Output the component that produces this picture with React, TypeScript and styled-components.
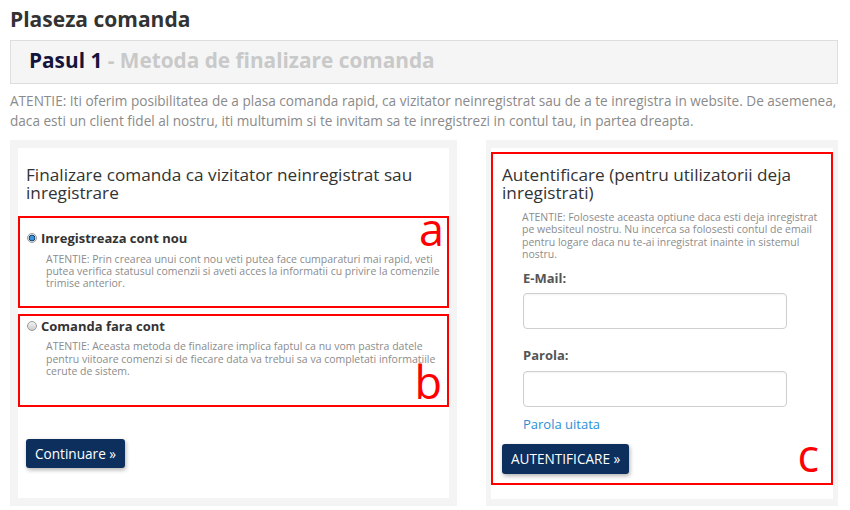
import styled, { createGlobalStyle } from 'styled-components';

const GlobalStyle = createGlobalStyle`
  body {
    margin: 0;
    background: #fff;
    font-family: "Open Sans", "Liberation Sans", sans-serif;
    color: #333;
  }
`;

const App = () => (
  <Page>
    <GlobalStyle />
    <PageTitle>Plaseza comanda</PageTitle>
    <StepBox>
      <StepNumber>Pasul 1</StepNumber>
      <StepName> - Metoda de finalizare comanda</StepName>
    </StepBox>
    <Intro>
      ATENTIE: Iti oferim posibilitatea de a plasa comanda rapid, ca vizitator neinregistrat sau de a te
      inregistra in website. De asemenea, daca esti un client fidel al nostru, iti multumim si te invitam sa te
      inregistrezi in contul tau, in partea dreapta.
    </Intro>
    <Columns>
      <Panel $pad="8px">
        <Card $pb="30px">
          <CardTitle $indent="8px">Finalizare comanda ca vizitator neinregistrat sau inregistrare</CardTitle>
          <Option $pad="12px 3px 16px 7px">
            <OptionLabel>
              <Radio $checked />
              Inregistreaza cont nou
            </OptionLabel>
            <Note $indent="19px">
              ATENTIE: Prin crearea unui cont nou veti putea face cumparaturi mai rapid, veti putea verifica
              statusul comenzii si aveti acces la informatii cu privire la comenzile trimise anterior.
            </Note>
            <Marker $top="-12px" $right="3px">a</Marker>
          </Option>
          <Option $pad="2px 3px 28px 7px">
            <OptionLabel>
              <Radio />
              Comanda fara cont
            </OptionLabel>
            <Note $indent="19px">
              ATENTIE: Aceasta metoda de finalizare implica faptul ca nu vom pastra datele pentru viitoare
              comenzi si de fiecare data va trebui sa va completati informatiile cerute de sistem.
            </Note>
            <Marker $top="43px" $right="5px">b</Marker>
          </Option>
          <Button $mt="32px" $ml="8px">Continuare »</Button>
        </Card>
      </Panel>
      <Panel $pad="8px 5px 7px">
        <Card>
          <LoginBox>
            <CardTitle>Autentificare (pentru utilizatorii deja inregistrati)</CardTitle>
            <Note $indent="20px" $mt="9px">
              ATENTIE: Foloseste aceasta optiune daca esti deja inregistrat pe websiteul nostru. Nu incerca sa
              folosesti contul de email pentru logare daca nu te-ai inregistrat inainte in sistemul nostru.
            </Note>
            <Field>
              <FieldLabel>E-Mail:</FieldLabel>
              <Input type="text" />
            </Field>
            <Field $mt="18px">
              <FieldLabel>Parola:</FieldLabel>
              <Input type="password" />
            </Field>
            <ForgotLink href="#">Parola uitata</ForgotLink>
            <Button $mt="11px" $h="30px">AUTENTIFICARE »</Button>
            <Marker $top="278px" $right="12px">c</Marker>
          </LoginBox>
        </Card>
      </Panel>
    </Columns>
  </Page>
);

const Page = styled.div`
  padding: 0 12px 0 10px;
`;

const PageTitle = styled.h1`
  margin: 7px 0 0;
  font-size: 21px;
  line-height: 25px;
  font-weight: 700;
  color: #333;
`;

const StepBox = styled.div`
  margin-top: 8px;
  padding: 7px 18px 11px;
  border: 1px solid #dedede;
  background: #f5f5f5;
  font-size: 20.8px;
  line-height: 24px;
  font-weight: 700;
`;

const StepNumber = styled.span`
  color: #14143c;
`;

const StepName = styled.span`
  color: #c9c9c9;
`;

const Intro = styled.p`
  margin: 7px -12px 9px 0;
  font-size: 13.6px;
  line-height: 20px;
  color: #8a8a8a;
`;

const Columns = styled.div`
  display: grid;
  grid-template-columns: 447px 352px;
  column-gap: 29px;
  align-items: stretch;
`;

const Panel = styled.div<{ $pad: string }>`
  background: #f4f4f5;
  padding: ${p => p.$pad};
  display: flex;
`;

const Card = styled.div<{ $pb?: string }>`
  flex: 1;
  background: #fff;
  padding-bottom: ${p => p.$pb || '0'};
`;

const CardTitle = styled.h2<{ $indent?: string }>`
  margin: 0;
  padding: ${p => (p.$indent ? `18px ${p.$indent} 0` : '0')};
  margin-bottom: ${p => (p.$indent ? '14px' : '0')};
  font-size: 17.2px;
  line-height: 18px;
  font-weight: 400;
  color: #333;
`;

const Option = styled.div<{ $pad: string }>`
  position: relative;
  border: 2px solid #ff0000;
  padding: ${p => p.$pad};
  & + & {
    margin-top: 6px;
  }
`;

const OptionLabel = styled.label`
  display: flex;
  align-items: center;
  gap: 4px;
  font-size: 13px;
  line-height: 16px;
  font-weight: 700;
  color: #333;
`;

const Radio = styled.span<{ $checked?: boolean }>`
  flex: none;
  box-sizing: border-box;
  width: 10px;
  height: 10px;
  border-radius: 50%;
  border: 1px solid #9c9c9c;
  background: ${p =>
    p.$checked
      ? 'radial-gradient(circle, #3f93d8 0 2px, #0d3c6e 2.8px 3.2px, #ececec 3.6px)'
      : 'linear-gradient(#f2f2f2, #cdcdcd)'};
`;

const Note = styled.p<{ $indent: string; $mt?: string }>`
  margin: ${p => p.$mt || '6.5px'} 0 0 ${p => p.$indent};
  font-size: 10.5px;
  line-height: 12.4px;
  color: #8c8c8c;
`;

const Marker = styled.span<{ $top: string; $right: string }>`
  position: absolute;
  top: ${p => p.$top};
  right: ${p => p.$right};
  font-size: 45px;
  line-height: 45px;
  color: #ff0000;
`;

const Button = styled.button<{ $mt: string; $ml?: string; $h?: string }>`
  display: block;
  margin: ${p => p.$mt} 0 0 ${p => p.$ml || '0'};
  height: ${p => p.$h || '29px'};
  padding: 0 9px;
  border: none;
  border-radius: 3px;
  background: #0c2f5e;
  color: #fff;
  font-family: "Open Sans", "Liberation Sans", sans-serif;
  font-size: 13.6px;
  box-shadow: 1px 2px 4px rgba(0, 0, 0, 0.3);
`;

const LoginBox = styled.div`
  position: relative;
  margin: 4px 0 11px;
  border: 2px solid #ff0000;
  padding: 12px 9px 9px;
`;

const Field = styled.div<{ $mt?: string }>`
  margin: ${p => p.$mt || '9px'} 0 0 21px;
`;

const FieldLabel = styled.label`
  display: block;
  font-size: 13px;
  line-height: 16px;
  font-weight: 700;
  color: #555;
`;

const Input = styled.input`
  display: block;
  box-sizing: border-box;
  margin-top: 7.5px;
  width: 264px;
  height: 36px;
  border: 1px solid #cfcfcf;
  border-radius: 4px;
  box-shadow: inset 0 1px 2px rgba(0, 0, 0, 0.05);
`;

const ForgotLink = styled.a`
  display: block;
  margin: 8px 0 0 21px;
  font-size: 13px;
  line-height: 18px;
  color: #2b8fd6;
  text-decoration: none;
`;

export default App;
